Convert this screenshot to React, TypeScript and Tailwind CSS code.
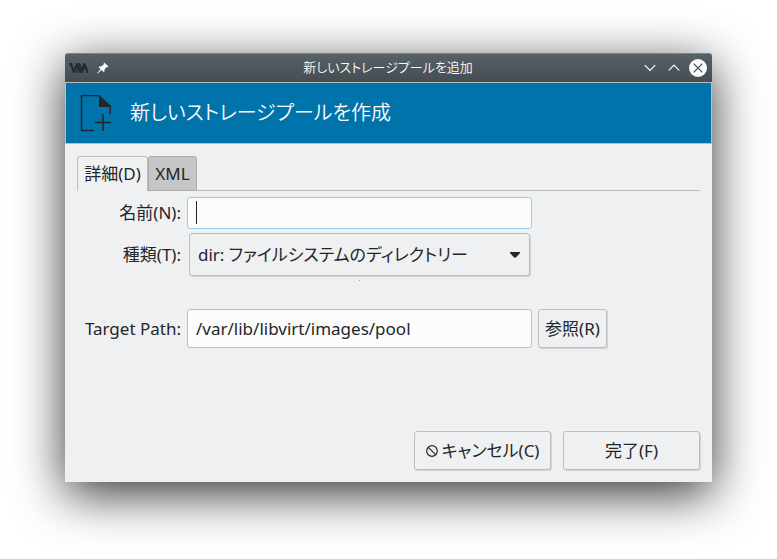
import React from "react";

const buttonClass =
  "flex items-center justify-center rounded-[3px] border border-[#bcbebf] bg-[#eff0f1] shadow-[1px_1px_1px_rgba(0,0,0,0.12)]";

function AppLogo() {
  return (
    <svg width="20" height="10" viewBox="0 0 20 10" aria-hidden="true">
      <g fill="none" stroke="#25292c" strokeWidth="2.2">
        <path d="M0 1H2L5 9 8 1 11.5 9 15.5 1 18.8 10" />
        <path d="M7.5 10 10.5 1 13 7" strokeWidth="1.4" />
        <path d="M13 10 16 2" strokeWidth="1.6" />
      </g>
    </svg>
  );
}

function PinIcon() {
  return (
    <svg width="12" height="12" viewBox="0 0 12 12" aria-hidden="true">
      <path d="M7.2 0.4 11.5 4.6 10.5 5.3 9.8 5 7.6 7.2 7.5 9.4 6.6 10 4.5 8 0.8 11.5 0.2 11.1 3.6 7.2 1.7 5.2 2.4 4.4 4.7 4.3 7 2.1 6.6 1.1Z" fill="#fcfcfc" />
    </svg>
  );
}

function NewDocumentIcon() {
  return (
    <svg width="32" height="37" viewBox="0 0 32 37" fill="none" aria-hidden="true">
      <path d="M14 35.5H1.5V0.5H19" stroke="#232629" strokeWidth="1.4" />
      <path d="M19 0 31 11V19H29.6V12H19Z" fill="#232629" />
      <path d="M23 19v17M15 27.5h16" stroke="#232629" strokeWidth="1.6" />
    </svg>
  );
}

function TitleBar() {
  return (
    <header className="flex h-[29px] items-center justify-between rounded-t-[3px] border-t border-[#7c8388] bg-linear-to-b from-[#576168] to-[#454d53] pr-[5px] pl-1 text-[#fcfcfc]">
      <div className="flex w-20 items-center gap-2">
        <AppLogo />
        <button type="button" aria-label="Pin">
          <PinIcon />
        </button>
      </div>
      <h1 className="text-[13px] font-[350]">新しいストレージプールを追加</h1>
      <div className="flex w-20 items-center justify-end gap-3">
        <button type="button" aria-label="Minimize">
          <svg width="12" height="8" viewBox="0 0 12 8" fill="none" stroke="currentColor" strokeWidth="1.2">
            <path d="M0.8 1.2 6 6.4 11.2 1.2" />
          </svg>
        </button>
        <button type="button" aria-label="Maximize">
          <svg width="12" height="8" viewBox="0 0 12 8" fill="none" stroke="currentColor" strokeWidth="1.2">
            <path d="M0.8 6.4 6 1.2 11.2 6.4" />
          </svg>
        </button>
        <button type="button" aria-label="Close" className="-ml-[3px]">
          <svg width="18" height="18" viewBox="0 0 18 18">
            <circle cx="9" cy="9" r="9" fill="#fcfcfc" />
            <path d="M4.7 4.7 13.3 13.3M13.3 4.7 4.7 13.3" stroke="#3f474d" strokeWidth="1.2" />
          </svg>
        </button>
      </div>
    </header>
  );
}

function Banner() {
  return (
    <div className="flex h-[62px] items-center gap-[18px] border border-[#b9bec2] bg-[#0073ab] px-[14px]">
      <NewDocumentIcon />
      <h2 className="text-xl font-[350] text-[#fcfcfc]">新しいストレージプールを作成</h2>
    </div>
  );
}

function Tabs() {
  return (
    <div role="tablist" className="flex border-b border-[#bcbebf]">
      <button
        type="button"
        role="tab"
        aria-selected="true"
        className="-mb-px h-[35px] w-[71px] rounded-t-[3px] border border-b-0 border-[#bcbebf] bg-[#eff0f1]"
      >
        詳細(D)
      </button>
      <button
        type="button"
        role="tab"
        aria-selected="false"
        className="-mb-px h-[35px] w-[49px] rounded-t-[3px] border border-[#a9abac] bg-[#c5c6c8]"
      >
        XML
      </button>
    </div>
  );
}

function PoolForm() {
  return (
    <div className="grid grid-cols-[97px_minmax(0,345px)_auto] items-center justify-start gap-x-[6px] pt-[6px] pl-[7px]">
      <label htmlFor="name" className="text-right">
        名前(N):
      </label>
      <div className="relative">
        <input
          id="name"
          type="text"
          className="block h-8 w-full rounded-[3px] border border-[#93cee9] bg-[#fcfcfc] px-2 outline-none"
        />
        <span className="absolute top-1 left-[9px] h-[23px] w-px bg-[#232629]" />
      </div>
      <span />

      <label htmlFor="type" className="mt-1 text-right">
        種類(T):
      </label>
      <div className="relative mt-1 px-[2px]">
        <select
          id="type"
          className="block h-[43px] w-full appearance-none rounded-[3px] border border-[#bcbebf] bg-[#eff0f1] px-2 shadow-[1px_1px_1px_rgba(0,0,0,0.12)]"
        >
          <option>dir: ファイルシステムのディレクトリー</option>
        </select>
        <svg className="pointer-events-none absolute top-[19px] right-3" width="10" height="6" viewBox="0 0 10 6">
          <path d="M0 0H10V1L6 5.5H4L0 1Z" fill="#232629" />
        </svg>
      </div>
      <span />

      <hr className="col-start-2 mt-1 mb-7 w-px justify-self-center border-[#a0a2a4]" />

      <label htmlFor="path" className="col-start-1 whitespace-nowrap text-right">
        Target Path:
      </label>
      <input
        id="path"
        type="text"
        defaultValue="/var/lib/libvirt/images/pool"
        className="block h-[39px] w-full rounded-[3px] border border-[#bcbebf] bg-[#fcfcfc] px-2 outline-none"
      />
      <button type="button" className={buttonClass + " h-[39px] w-[69px]"}>
        参照(R)
      </button>
    </div>
  );
}

export default function App() {
  return (
    <div className="px-[65px] pt-[53px] pb-[77px] bg-white font-['Noto_Sans','Noto_Sans_CJK_JP',sans-serif] text-[17px] text-[#232629] [font-feature-settings:'palt']" lang="ja">
      <main className="rounded-t-[3px] bg-[#eff0f1] shadow-[0_12px_50px_rgba(0,0,0,0.8)]">
        <TitleBar />
        <Banner />
        <div className="px-3 pt-3 pb-3">
          <Tabs />
          <PoolForm />
          <footer className="mt-[83px] flex justify-end gap-3">
            <button type="button" className={buttonClass + " h-[39px] w-[137px] gap-1"}>
              <svg width="12" height="12" viewBox="0 0 12 12" fill="none" stroke="#232629" strokeWidth="1.2" aria-hidden="true">
                <circle cx="6" cy="6" r="5.3" />
                <path d="M2.3 2.3 9.7 9.7" />
              </svg>
              キャンセル(C)
            </button>
            <button type="button" className={buttonClass + " h-[39px] w-[137px]"}>
              完了(F)
            </button>
          </footer>
        </div>
      </main>
    </div>
  );
}
